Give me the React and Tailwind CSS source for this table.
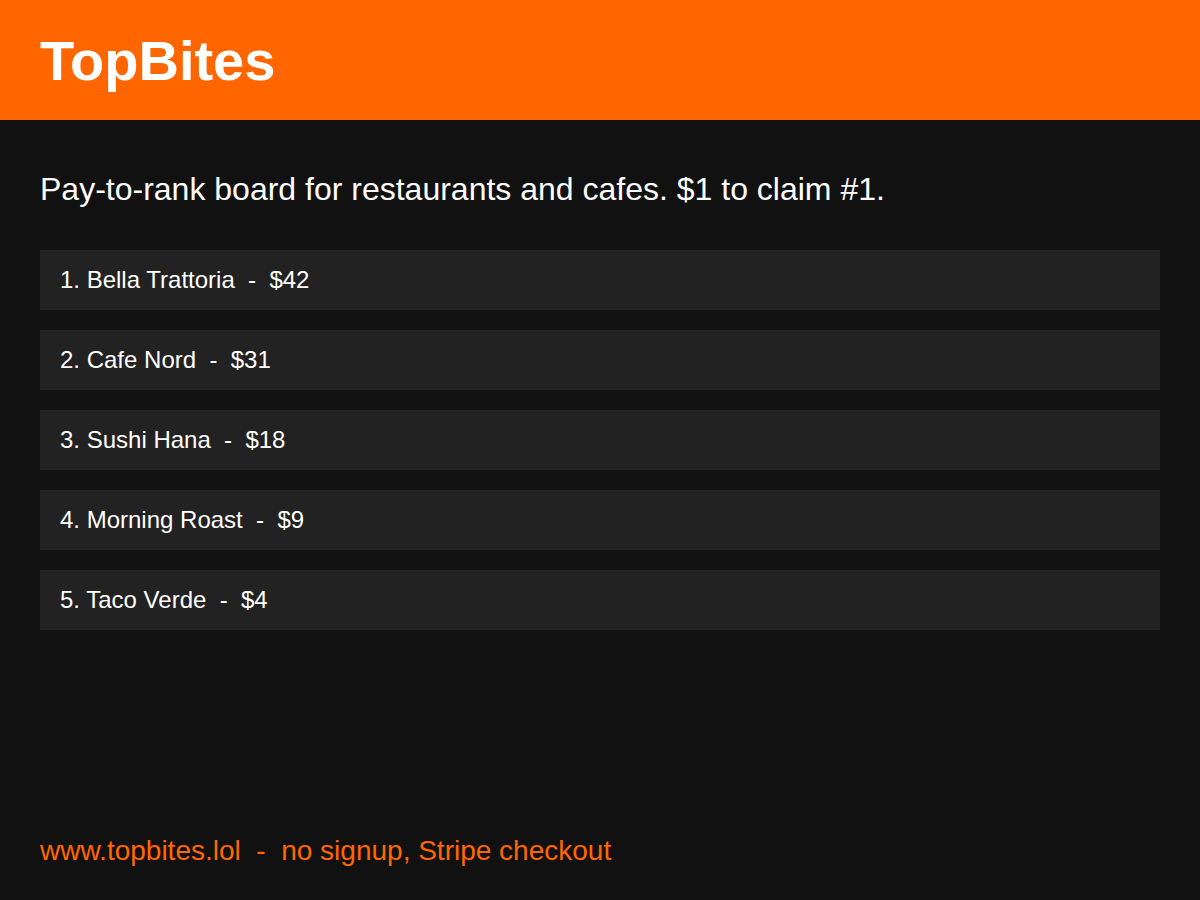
const entries = [
  { name: 'Bella Trattoria', amount: 42 },
  { name: 'Cafe Nord', amount: 31 },
  { name: 'Sushi Hana', amount: 18 },
  { name: 'Morning Roast', amount: 9 },
  { name: 'Taco Verde', amount: 4 },
];

export default function App() {
  return (
    <div className="w-[1200px] h-[900px] bg-[#111111] flex flex-col font-['Liberation_Sans',Arial,sans-serif]">
      {/* Header */}
      <header className="h-[120px] bg-[#ff6600] flex items-center px-10 pt-[2px] shrink-0">
        <h1 className="text-[56px] font-bold text-white leading-none">TopBites</h1>
      </header>

      {/* Main */}
      <main className="flex-1 px-10 pt-[49px]">
        <p className="text-[32px] text-white leading-[40px]">
          Pay-to-rank board for restaurants and cafes. $1 to claim #1.
        </p>
        <ul className="mt-[41px] flex flex-col gap-5">
          {entries.map((e, i) => (
            <li key={e.name} className="h-[60px] bg-[#222222] flex items-center px-5 text-[24px] text-white whitespace-pre">
              {`${i + 1}. ${e.name}  -  $${e.amount}`}
            </li>
          ))}
        </ul>
      </main>

      {/* Footer */}
      <footer className="px-10 pb-[35px] text-[28px] text-[#ff6600] leading-none whitespace-pre">
        {'www.topbites.lol  -  no signup, Stripe checkout'}
      </footer>
    </div>
  );
}
